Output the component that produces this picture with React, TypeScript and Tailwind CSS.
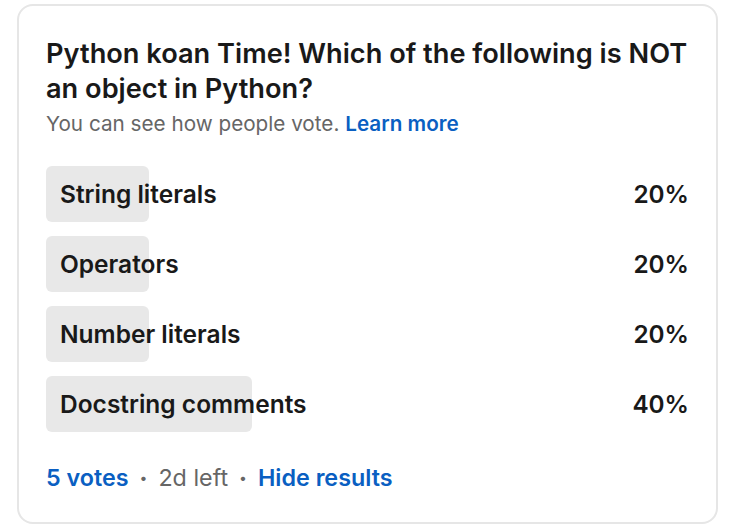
const options = [
  { label: "String literals", pct: 20, w: 103 },
  { label: "Operators", pct: 20, w: 103 },
  { label: "Number literals", pct: 20, w: 103 },
  { label: "Docstring comments", pct: 40, w: 206 },
];

export default function App() {
  return (
    <div className="h-[532px] w-[734px] bg-white pl-[17px] pr-[16px] pt-[4px] font-['Inter',sans-serif]">
      <div className="h-[520px] rounded-[16px] border-2 border-[#e6e6e6] px-[27px] pt-[30px]">
        <h1 className="mr-[-10px] text-[27.2px] font-semibold leading-[35px] text-[#191919]">
          Python koan Time! Which of the following is NOT
          <br />
          an object in Python?
        </h1>
        <p className="mt-[4px] text-[20.7px] leading-[28px] text-[#666666]">
          You can see how people vote.{" "}
          <span className="font-semibold text-[#0a5fc2]">Learn more</span>
        </p>

        <ul className="mt-[28px] flex flex-col gap-[14px]">
          {options.map((o) => (
            <li key={o.label} className="relative flex h-[56px] items-center justify-between">
              <div
                className="absolute left-0 top-0 h-full rounded-[6px] bg-[#e8e8e8]"
                style={{ width: o.w }}
              />
              <span className="relative pl-[14px] text-[24.5px] font-semibold text-[#191919]">
                {o.label}
              </span>
              <span className="relative text-[24.3px] font-semibold text-[#191919]">
                {o.pct}%
              </span>
            </li>
          ))}
        </ul>

        <div className="mt-[32px] flex items-center gap-[11px] text-[23.3px] leading-[28px]">
          <span className="font-semibold text-[#0a5fc2]">5 votes</span>
          <span className="text-[14px] text-[#666666]">•</span>
          <span className="text-[#666666]">2d left</span>
          <span className="text-[14px] text-[#666666]">•</span>
          <span className="font-semibold text-[#0a5fc2]">Hide results</span>
        </div>
      </div>
    </div>
  );
}
